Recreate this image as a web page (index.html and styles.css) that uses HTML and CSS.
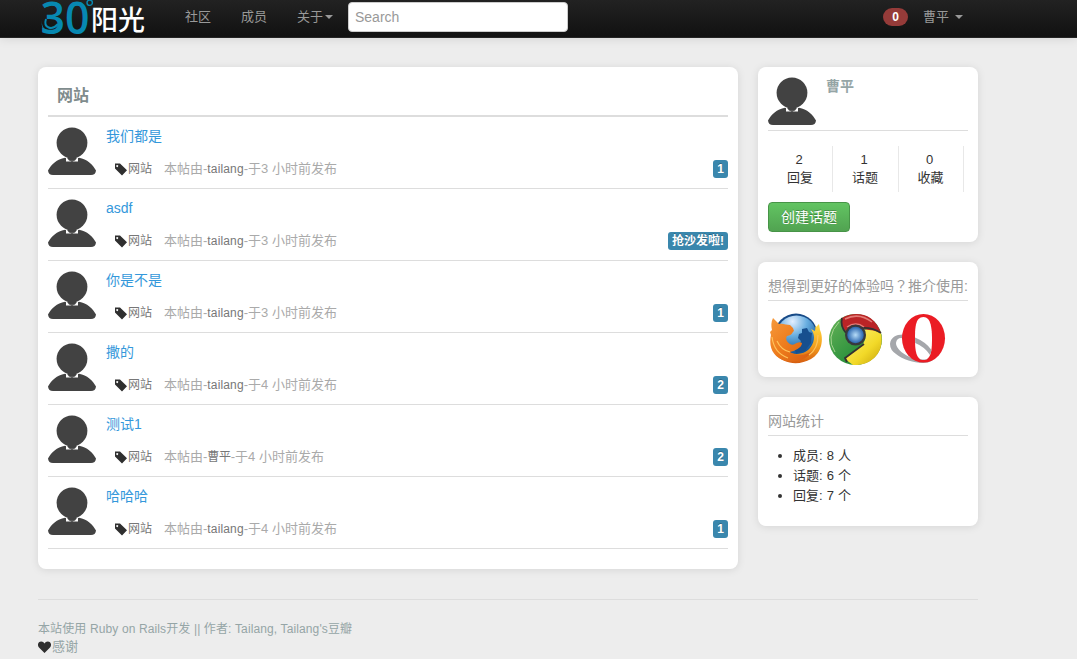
FILE: index.html
```html
<!DOCTYPE html>
<html lang="zh-CN">
<head>
<meta charset="utf-8">
<title>30°阳光</title>
<link rel="stylesheet" href="styles.css">
</head>
<body>
<svg class="defs" width="0" height="0" aria-hidden="true">
  <defs>
    <symbol id="avatar" viewBox="0 0 48 48">
      <path fill="#424242" d="M0 43.500C3 38 9 32 17 30.800L24 34 31 30.800C39 32 45 38 48 43.500Q47.500 48 43 48H5Q.500 48 0 43.500Z"/>
      <path fill="#fff" d="M18 30H30V34.500H18Z"/>
      <path fill="#424242" d="M19.500 31.500L21 33.500H27L28.500 31.500V29H19.500Z"/>
      <path fill="#424242" d="M21 33.300H27L24 35Z"/>
      <circle cx="24" cy="15.800" r="15.400" fill="#424242"/>
    </symbol>
    <symbol id="tag" viewBox="0 0 13 13">
      <path fill="#2f2f2f" fill-rule="evenodd" d="M1 .500H6L13 7.200 8 12.500 1 5.500ZM3.200 1.900a1 1 0 1 0 .01 0Z"/>
    </symbol>
  </defs>
</svg>
<header class="navbar">
  <a class="brand">
    <svg class="logo" width="58" height="38" viewBox="0 0 58 38">
      <text class="logo-digits" x="3.500" y="34.300" textLength="49" lengthAdjust="spacingAndGlyphs">30</text>
      <path d="M5.500 18C2 29 13 35 22 28C17 39 1 34 5.500 18Z" fill="#0788b1"/>
      <path d="M9 19C6 28 15 31 21 24" fill="none" stroke="#0788b1" stroke-width="2"/>
      <circle cx="52.700" cy="2.700" r="2.700" fill="none" stroke="#0788b1" stroke-width="1.400"/>
    </svg>
    <span class="brand-name">阳光</span>
  </a>
  <nav class="links"><a>社区</a><a>成员</a><a>关于<i class="caret"></i></a></nav>
  <input class="search" type="text" placeholder="Search">
  <div class="account"><span class="count">0</span><a>曹平<i class="caret"></i></a></div>
</header>
<div class="container">
  <div class="columns">
    <main class="card topics">
      <h1>网站</h1>
      <article class="topic"><svg class="avatar"><use href="#avatar"/></svg><div class="body"><a class="title">我们都是</a><div class="meta"><svg class="tag"><use href="#tag"/></svg><a class="node">网站</a><span class="info">本帖由-<a>tailang</a>-于3 小时前发布</span><b class="label">1</b></div></div></article>
      <article class="topic"><svg class="avatar"><use href="#avatar"/></svg><div class="body"><a class="title">asdf</a><div class="meta"><svg class="tag"><use href="#tag"/></svg><a class="node">网站</a><span class="info">本帖由-<a>tailang</a>-于3 小时前发布</span><b class="label">抢沙发啦!</b></div></div></article>
      <article class="topic"><svg class="avatar"><use href="#avatar"/></svg><div class="body"><a class="title">你是不是</a><div class="meta"><svg class="tag"><use href="#tag"/></svg><a class="node">网站</a><span class="info">本帖由-<a>tailang</a>-于3 小时前发布</span><b class="label">1</b></div></div></article>
      <article class="topic"><svg class="avatar"><use href="#avatar"/></svg><div class="body"><a class="title">撒的</a><div class="meta"><svg class="tag"><use href="#tag"/></svg><a class="node">网站</a><span class="info">本帖由-<a>tailang</a>-于4 小时前发布</span><b class="label">2</b></div></div></article>
      <article class="topic"><svg class="avatar"><use href="#avatar"/></svg><div class="body"><a class="title">测试1</a><div class="meta"><svg class="tag"><use href="#tag"/></svg><a class="node">网站</a><span class="info">本帖由-<a class="cjk">曹平</a>-于4 小时前发布</span><b class="label">2</b></div></div></article>
      <article class="topic"><svg class="avatar"><use href="#avatar"/></svg><div class="body"><a class="title">哈哈哈</a><div class="meta"><svg class="tag"><use href="#tag"/></svg><a class="node">网站</a><span class="info">本帖由-<a>tailang</a>-于4 小时前发布</span><b class="label">1</b></div></div></article>
    </main>
    <aside class="sidebar">
      <section class="card profile">
        <div class="user"><svg class="avatar"><use href="#avatar"/></svg><strong>曹平</strong></div>
        <div class="stats"><div>2<span>回复</span></div><div>1<span>话题</span></div><div>0<span>收藏</span></div></div>
        <a class="create">创建话题</a>
      </section>
      <section class="card browsers">
        <h2>想得到更好的体验吗<span class="mark" lang="zh-TW">？</span>推介使用:</h2>
        <div class="icons">
          <svg width="56" height="56" viewBox="0 0 56 56">
            <defs>
              <radialGradient id="globe" cx=".4" cy=".15" r=".8"><stop offset="0" stop-color="#e3efff"/><stop offset=".45" stop-color="#68aee0"/><stop offset="1" stop-color="#12569b"/></radialGradient>
              <linearGradient id="fox" x1="0" y1="0" x2="1" y2="1"><stop offset="0" stop-color="#f69a3c"/><stop offset=".5" stop-color="#ed7b1c"/><stop offset="1" stop-color="#d65a10"/></linearGradient>
              <linearGradient id="tail" x1="0" y1="0" x2="0" y2="1"><stop offset="0" stop-color="#ffe24a"/><stop offset=".55" stop-color="#f6a51f"/><stop offset="1" stop-color="#d65d10"/></linearGradient>
            </defs>
            <circle cx="28" cy="24" r="21.500" fill="#174a87"/>
            <circle cx="28.500" cy="24.500" r="20" fill="url(#globe)"/>
            <path fill="#174f8e" d="M34 18l5-1 2 4 3 1-1 10-6 8-9 2-2-5 5-2 2-5-3-3 1-4 3-1Z"/>
            <path fill="url(#tail)" d="M48 11L47 17 51 13 52 19C56 28 54 42 43 48C31 55 15 53 7 43L13 36C23 46 38 45 44 34C48 26 45 21 43 18L47 20Z"/>
            <path fill="url(#fox)" d="M5 7L11 13C15 12 18 14 22 14L25 17L26 20C24 21 25 24 19 25C17 28 19 31 22 33C26 36 29 29 34 32C34 37 26 40 22 41C29 46 39 44 44 40C39 50 22 54 11 47C3 42 1 33 3 24L2 21 4 19C3 15 3 11 5 7Z"/>
            <path d="M4 26Q6 42 20 47M9 30Q13 39 22 41M50 24Q50 38 41 44" fill="none" stroke="#ffc25a" stroke-width="1.200"/>
          </svg>
          <svg width="56" height="56" viewBox="0 0 56 56">
            <defs>
              <linearGradient id="cg" x1="0" y1="0" x2="1" y2="1"><stop offset="0" stop-color="#67b358"/><stop offset=".6" stop-color="#2f933e"/><stop offset="1" stop-color="#1b6e2c"/></linearGradient>
              <linearGradient id="cy" x1="0" y1="0" x2="1" y2="1"><stop offset="0" stop-color="#fff27a"/><stop offset=".6" stop-color="#f2d928"/><stop offset="1" stop-color="#c5a10b"/></linearGradient>
              <radialGradient id="cb"><stop offset="0" stop-color="#b6dcf8"/><stop offset="1" stop-color="#2864ad"/></radialGradient>
            </defs>
            <ellipse cx="27.500" cy="28.500" rx="26.500" ry="25.500" fill="url(#cg)"/>
            <path fill="#ba2426" d="M14 7C26 0 46 1 53 22L36 18 20 22Q12 16 14 7Z"/>
            <path fill="url(#cy)" d="M35 19Q44 18 53 22C57 41 44 55 25 54L17 48 35 33Q40 25 35 19Z"/>
            <path fill="none" stroke="#343132" stroke-width="1.800" d="M14 7Q12 15 18 22M33 17Q44 16 53 22M36 33L17 47 19 51"/>
            <path fill="none" stroke="#e37c76" stroke-width="1.500" d="M17 8Q31 1 44 11M19 16Q28 10 36 16"/>
            <path fill="none" stroke="#a6d590" stroke-width="1" d="M11 11Q-3 26 7 41"/>
            <circle cx="27.500" cy="24" r="10.500" fill="#38383c"/><circle cx="27.500" cy="24" r="8.300" fill="url(#cb)"/>
          </svg>
          <svg width="58" height="56" viewBox="0 0 58 56">
            <path fill="#a5a7ab" fill-rule="evenodd" d="M2 33C3 21 20 21 33 29C44 35 49 44 45 49C38 55 18 51 8 43Q2 39 2 33ZM8 32C8 40 23 49 36 49C39 40 27 31 18 28Q9 25 8 32Z"/>
            <ellipse cx="35.500" cy="27.300" rx="21.500" ry="24.300" fill="#eb1c24"/>
            <path fill="#fff" d="M35.500 6C27 6 27 18 27 28C27 39 28 49 35.500 49C43 49 44 39 44 28C44 18 43 6 35.500 6Z"/>
            <path fill="#a5a7ab" d="M27 26.500Q38 31 43.500 39Q43 42 42 44Q37 36 27.200 32Z"/>
            <path fill="#a5a7ab" d="M30.500 47.500Q35.500 49.500 40.500 47.500Q35.500 50.500 30.500 47.500Z"/>
          </svg>
        </div>
      </section>
      <section class="card totals">
        <h2>网站统计</h2>
        <ul><li>成员: 8 人</li><li>话题: 6 个</li><li>回复: 7 个</li></ul>
      </section>
    </aside>
  </div>
  <footer>
    <p class="credits">本站使用 Ruby on Rails开发 || 作者: Tailang, Tailang's豆瓣</p>
    <p class="thanks"><svg width="13" height="12" viewBox="0 0 13 12"><path fill="#2f2f2f" d="M6.500 12L1 6.500C-1 4 0 .500 3.300.500Q5.500.500 6.500 2.500Q7.500.500 9.700.500C13 .500 14 4 12 6.500Z"/></svg>感谢</p>
  </footer>
</div>
</body>
</html>
```
FILE: styles.css
```css
* { box-sizing: border-box; }
body {
  margin: 0;
  height: 659px;
  overflow: hidden;
  background: #ededed;
  color: #333;
  font: 13px/20px "Liberation Sans", "Noto Sans CJK SC", sans-serif;
}
h1, h2, p, ul { margin: 0; }
.defs { display: block; height: 0; }

.navbar {
  display: flex;
  height: 38px;
  padding-left: 37px;
  background: linear-gradient(#222, #111);
  border-bottom: 1px solid #252525;
  box-shadow: 0 1px 10px rgba(0, 0, 0, .1);
  color: #999;
}
.brand { display: flex; width: 133px; }
.logo { flex: none; overflow: visible; }
.logo-digits { font: 600 46px "Open Sans", sans-serif; fill: #0788b1; }
.brand-name {
  margin-left: -4px;
  color: #fff;
  font-size: 27px;
  font-weight: 500;
  line-height: 42px;
  white-space: nowrap;
}
.links { display: flex; width: 178px; line-height: 34px; }
.links a { padding: 0 15px; white-space: nowrap; }
.links a:last-child { padding-right: 0; }
.caret {
  display: inline-block;
  border: 4px solid transparent;
  border-top-color: #999;
  border-bottom: 0;
  margin-left: 2px;
  vertical-align: 2px;
}
.search {
  width: 220px;
  height: 30px;
  margin: 2px 0 0;
  padding: 4px 6px;
  border: 1px solid #ccc;
  border-radius: 4px;
  font: 14px/20px "Liberation Sans", sans-serif;
}
.search::placeholder { color: #999; }
.account { display: flex; margin-left: 315px; line-height: 34px; }
.account a { margin-left: 15px; }
.account .caret { margin-left: 6px; }
.count {
  width: 25px;
  height: 18px;
  margin-top: 8px;
  border-radius: 9px;
  background: #953b39;
  color: #fff;
  font-size: 12px;
  font-weight: bold;
  line-height: 18px;
  text-align: center;
}

.container { width: 940px; margin: 29px 0 0 38px; }
.columns { display: flex; gap: 20px; align-items: flex-start; }
.card {
  padding: 10px;
  border-radius: 8px;
  background: #fff;
  box-shadow: 0 1px 8px rgba(0, 0, 0, .1);
}
.topics { width: 700px; height: 502px; }
.topics h1 {
  height: 40px;
  padding-left: 9px;
  border-bottom: 2px solid #ddd;
  color: #7f8c8d;
  font-size: 16px;
  line-height: 38px;
}
.topic {
  display: flex;
  gap: 10px;
  height: 72px;
  padding-top: 10px;
  border-bottom: 1px solid #ddd;
}
.avatar { display: block; flex: none; width: 48px; height: 48px; }
.body { flex: 1; }
.title { display: block; height: 20px; color: #3498db; font-size: 14px; line-height: 18px; }
.meta { display: flex; align-items: center; height: 18px; margin-top: 13px; padding-left: 8px; color: #aaa; line-height: 18px; }
.tag { width: 13px; height: 13px; margin-right: 1px; }
.node { width: 36px; color: #777; font-size: 12px; }
.info a { color: #777; font-size: 12px; letter-spacing: .15px; }
.info .cjk { letter-spacing: -.3px; }
.label {
  height: 18px;
  margin-left: auto;
  padding: 0 4px;
  border-radius: 3px;
  background: #3a87ad;
  color: #fff;
  font-size: 12px;
  text-shadow: 0 -1px 0 rgba(0, 0, 0, .25);
}

.sidebar { display: flex; flex-direction: column; gap: 20px; width: 220px; }
.profile { height: 175px; }
.user { display: flex; gap: 10px; height: 54px; border-bottom: 1px solid #ddd; }
.user strong { color: #95a5a6; font-size: 14px; line-height: 18px; }
.stats { display: grid; grid-template-columns: 65px 66px 65px; height: 46px; margin: 15px 0 10px; }
.stats div { padding: 5px 3px 0 0; border-right: 1px solid #e8e8e8; line-height: 18px; text-align: center; }
.stats div:first-child { padding-right: 2px; }
.stats span { display: block; padding-left: 2px; line-height: 18px; }
.create {
  display: block;
  width: 82px;
  height: 30px;
  border: 1px solid #479447;
  border-radius: 4px;
  background: linear-gradient(#62c462, #51a351);
  color: #fff;
  font-size: 14px;
  line-height: 28px;
  text-align: center;
  text-shadow: 0 -1px 0 rgba(0, 0, 0, .25);
}
.card h2 {
  height: 29px;
  border-bottom: 1px solid #ddd;
  color: #999;
  font-size: 14px;
  font-weight: normal;
  line-height: 28px;
  white-space: nowrap;
}
.mark { font-family: "Noto Sans CJK TC", sans-serif; line-height: 1; }
.browsers { height: 115px; }
.icons { display: flex; gap: 4px; padding-top: 10px; }
.totals { height: 129px; }
.totals ul { margin-top: 10px; padding-left: 25px; word-spacing: .5px; }

footer {
  margin-top: 30px;
  padding-top: 20px;
  border-top: 1px solid #ddd;
  color: #95a5a6;
  font-size: 12px;
  line-height: 18px;
}
.credits { letter-spacing: .12px; }
.thanks { display: flex; align-items: center; gap: 1px; font-size: 13px; }
```
